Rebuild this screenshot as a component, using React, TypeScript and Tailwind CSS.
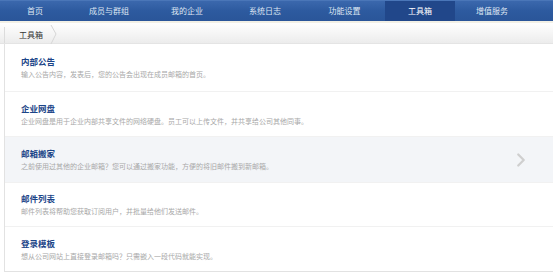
import { ChevronRight } from 'lucide-react';

const navItems = [
    { label: '首页', w: 'w-[70px]' },
    { label: '成员与群组', w: 'w-[78px]' },
    { label: '我的企业', w: 'w-[78px]' },
    { label: '系统日志', w: 'w-[78px]' },
    { label: '功能设置', w: 'w-[81px]' },
    { label: '工具箱', w: 'w-[70px]', active: true },
    { label: '增值服务', w: 'w-[74px]' },
];

const tools = [
    { title: '内部公告', desc: '输入公告内容，发表后，您的公告会出现在成员邮箱的首页。', h: 'h-[48px]' },
    { title: '企业网盘', desc: '企业网盘是用于企业内部共享文件的网络硬盘。员工可以上传文件，并共享给公司其他同事。', h: 'h-[45px]' },
    { title: '邮箱搬家', desc: '之前使用过其他的企业邮箱？您可以通过搬家功能，方便的将旧邮件搬到新邮箱。', h: 'h-[46px]', hover: true },
    { title: '邮件列表', desc: '邮件列表将帮助您获取订阅用户，并批量给他们发送邮件。', h: 'h-[44px]' },
    { title: '登录模板', desc: '想从公司网站上直接登录邮箱吗？只需嵌入一段代码就能实现。', h: 'h-[44px]' },
];

export default function App() {
    return (
        <div className="w-full h-[274px] overflow-hidden bg-white font-['Noto_Sans_CJK_SC',sans-serif]">
            {/* Top nav */}
            <div className="flex h-[21px] bg-gradient-to-b from-[#3b68ad] via-[#2d5a9f] to-[#2a5599] border-t border-[#4a76b8]">
                {navItems.map((item) => (
                    <div
                        key={item.label}
                        className={`${item.w} flex items-center justify-center text-[8px] leading-none ${
                            item.active ? 'bg-[#21478a] text-white' : 'text-[#dfe7f3]'
                        }`}
                    >
                        {item.label}
                    </div>
                ))}
            </div>
            <div className="h-[2px] bg-[#f2f0e6]" />

            {/* Breadcrumb */}
            <div className="flex h-[21px] items-stretch bg-gradient-to-b from-white to-[#ececec] border-b border-[#e4e4e4]">
                <div className="ml-[4px] mt-[4px] flex items-center border-l border-[#dcdcdc] pl-[14px] pr-[7px] text-[8px] text-[#333]">
                    工具箱
                </div>
                <svg width="8" height="21" viewBox="0 0 8 21">
                    <path d="M1 2 L6 11 L1 21" fill="none" stroke="#d6d6d6" strokeWidth="1" />
                </svg>
            </div>

            {/* Tool list */}
            <div className="ml-[4px] border-l border-b border-[#e2e2e2]">
                {tools.map((t, i) => (
                    <div
                        key={t.title}
                        className={`${t.h} relative flex flex-col justify-center pl-[16px] ${
                            i < tools.length - 1 ? 'border-b border-[#f1f1f1]' : ''
                        } ${t.hover ? 'bg-[#f3f5f8]' : ''}`}
                    >
                        <div className="text-[8.5px] font-bold leading-[13px] text-[#1b4588]">{t.title}</div>
                        <div className="text-[7px] leading-[12px] text-[#a8a8a8]">{t.desc}</div>
                        {t.hover && (
                            <ChevronRight
                                className="absolute right-[21px] top-1/2 -translate-y-1/2 text-[#cfcfcf]"
                                size={22}
                                strokeWidth={2.5}
                            />
                        )}
                    </div>
                ))}
            </div>
        </div>
    );
}
